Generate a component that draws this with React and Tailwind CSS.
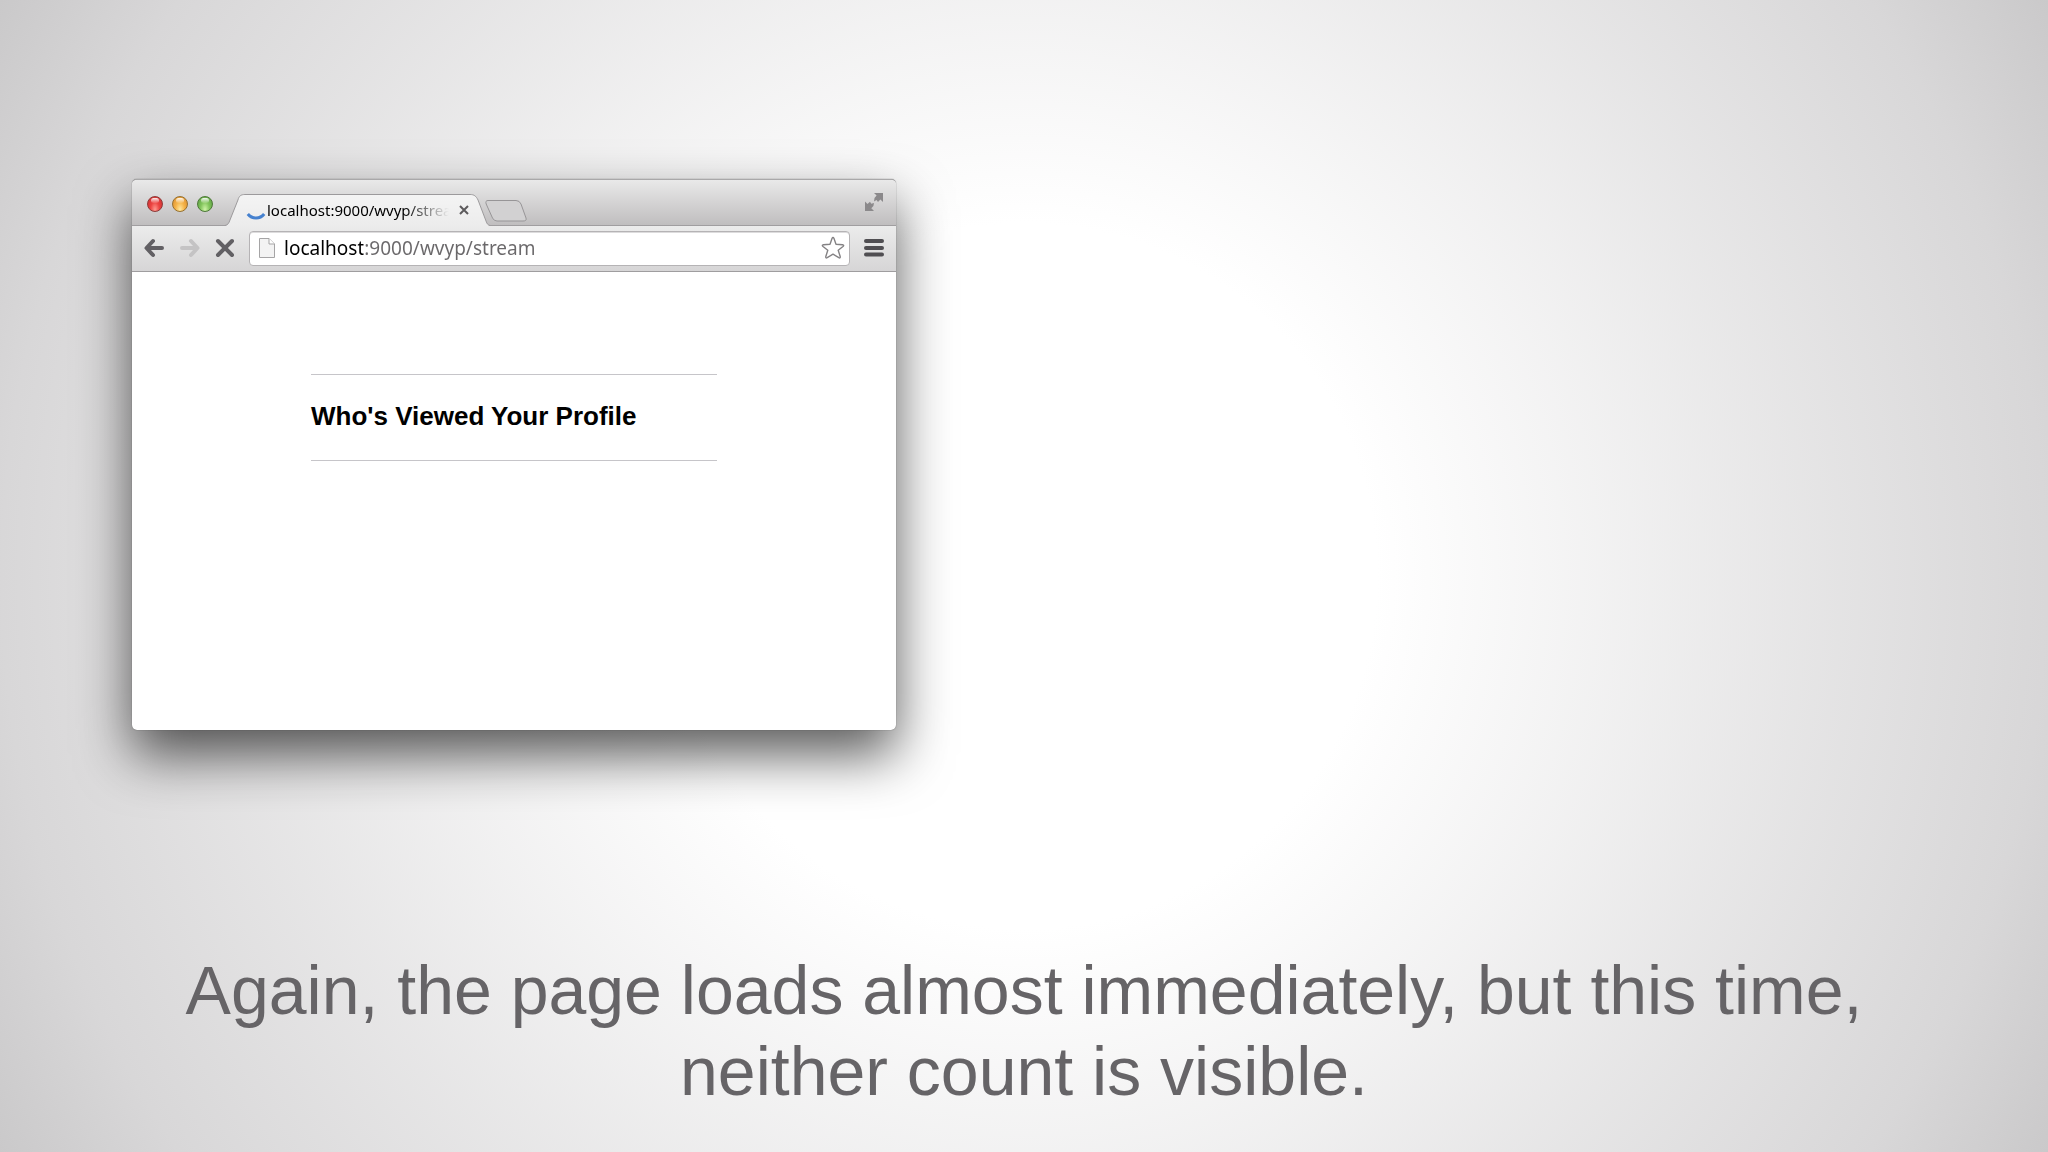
const lights = [
  { name: "Close window", style: "border-[#8d3a38] bg-[radial-gradient(ellipse_at_50%_90%,#ff9a90_0%,#ec4340_45%,#c92d30_100%)]" },
  { name: "Minimize window", style: "border-[#96702f] bg-[radial-gradient(ellipse_at_50%_90%,#ffe9a0_0%,#f5b44a_45%,#d98a2b_100%)]" },
  { name: "Zoom window", style: "border-[#4d7838] bg-[radial-gradient(ellipse_at_50%_90%,#d0f5a8_0%,#83c55c_45%,#569a3e_100%)]" },
];

function TitleBar() {
  return (
    <div className="flex h-[46px] items-end bg-linear-to-b from-[#e9e9e9] to-[#bfbdbe] pr-3 pl-[15px] shadow-[inset_0_-1px_0_#a09ea0]">
      <div className="flex gap-[9px] self-center pt-[2px]">
        {lights.map((l) => (
          <button
            key={l.name}
            aria-label={l.name}
            className={`flex size-4 justify-center rounded-full border pt-px ${l.style}`}
          >
            <span className="h-[5px] w-2 rounded-full bg-linear-to-b from-white/90 to-white/10" />
          </button>
        ))}
      </div>
      <div className="relative ml-3 flex h-8 w-[265px] items-center pr-[21px] pl-[21px]">
        <svg viewBox="0 0 266 32" preserveAspectRatio="none" className="absolute inset-0 size-full" aria-hidden="true">
          <defs>
            <linearGradient id="tab-fill" x1="0" y1="0" x2="0" y2="1">
              <stop offset="0" stopColor="#f4f4f4" />
              <stop offset="1" stopColor="#ececec" />
            </linearGradient>
          </defs>
          <path
            d="M0 32 C3 31 4 29 5 26 L13 6 C14 2 16 .5 20 .5 L246 .5 C250 .5 252 2 254 6 L262 27 C263 30 264 31 266 32 Z"
            fill="url(#tab-fill)"
          />
          <path
            d="M0 31.5 C3 31 4 29 5 26 L13 6 C14 2 16 .5 20 .5 L246 .5 C250 .5 252 2 254 6 L262 27 C263 30 264 31 266 31.5"
            fill="none"
            stroke="#9c9a9c"
          />
        </svg>
        <svg viewBox="0 0 20 20" className="relative size-5 shrink-0" aria-hidden="true">
          <path d="M1.800 14 A10.500 10.500 0 0 0 18.200 14" fill="none" stroke="#4681cf" strokeWidth="3" />
        </svg>
        <span className="relative ml-px flex-1 overflow-hidden bg-linear-to-r from-black from-75% to-transparent bg-clip-text text-[15px] leading-5 whitespace-nowrap text-transparent">
          localhost:9000/wvyp/stream
        </span>
        <button aria-label="Close tab" className="relative ml-[10px] shrink-0">
          <svg viewBox="0 0 10 10" className="size-[10px]">
            <path d="M1 1 L9 9 M9 1 L1 9" stroke="#5c5a5c" strokeWidth="2" />
          </svg>
        </button>
      </div>
      <button aria-label="New tab" className="mb-[4px] -ml-[5px]">
        <svg viewBox="0 0 42 22" className="h-[22px] w-[42px]">
          <path
            d="M3 .5 L31 .5 Q34.500 .5 36 4 L41 18 Q42 21 38 21 L12 21 Q9 21 7.500 18 L1.200 4 Q0 .5 3 .5 Z"
            fill="#d2d1d2"
            stroke="#979597"
          />
        </svg>
      </button>
      <button aria-label="Enter full screen" className="mb-[14px] ml-auto">
        <svg viewBox="0 0 20 20" className="size-5" fill="#8b898b">
          <path d="M10 1 H19 V10 L16.400 7.400 L14 10 L12.500 8 L10 9.500 L10.500 6 L12.600 3.600 Z" />
          <path d="M10 19 H1 V9.500 L3.500 12 L6 9.800 L7.200 11.800 L10 11 L9.400 14 L7.300 16.300 Z" />
        </svg>
      </button>
    </div>
  );
}

function ToolBar() {
  return (
    <div className="flex h-[46px] items-center border-b border-[#9f9d9f] bg-linear-to-b from-[#ececec] to-[#d6d5d6] pr-3 pb-px pl-[11px]">
      <button aria-label="Back">
        <svg viewBox="0 0 22 20" className="h-5 w-[22px]" fill="none" stroke="#626064" strokeWidth="4" strokeLinecap="round" strokeLinejoin="round">
          <path d="M10 3 L3.500 10 L10 17 M4 10 H19" />
        </svg>
      </button>
      <button aria-label="Forward" className="ml-[14px]">
        <svg viewBox="0 0 22 20" className="h-5 w-[22px]" fill="none" stroke="#c4c3c4" strokeWidth="4" strokeLinecap="round" strokeLinejoin="round">
          <path d="M12 3 L18.500 10 L12 17 M18 10 H3" />
        </svg>
      </button>
      <button aria-label="Stop loading" className="ml-[14px]">
        <svg viewBox="0 0 20 20" className="size-5" fill="none" stroke="#626064" strokeWidth="4" strokeLinecap="round">
          <path d="M3 3 L17 17 M17 3 L3 17" />
        </svg>
      </button>
      <div className="ml-[14px] flex h-[35px] flex-1 items-center rounded-[4px] border border-[#b5b3b5] bg-white pr-1 pl-[9px] shadow-[inset_0_1px_0_#dddcdd]">
        <svg viewBox="0 0 16 20" className="h-5 w-4 shrink-0" fill="#f3f3f3" stroke="#a5a4a5" aria-hidden="true">
          <path d="M.5 .5 H10 L15.500 6 V19.500 H.5 Z" />
          <path d="M10 .5 V6 H15.500" fill="#fff" />
        </svg>
        <input
          aria-label="Address"
          defaultValue="localhost:9000/wvyp/stream"
          className="ml-[9px] min-w-0 flex-1 bg-[linear-gradient(to_right,#000_79px,#6a686a_79px)] bg-clip-text text-[19px] leading-7 text-transparent outline-none"
        />
        <button aria-label="Bookmark this page" className="shrink-0">
          <svg viewBox="0 0 24 24" className="size-6" fill="#fff" stroke="#848284" strokeWidth="1.400" strokeLinejoin="round">
            <path d="M12 1.500 Q12.600 1.500 13 2.500 L15 8.300 L21.500 8.700 Q23.500 9 22 10.500 L17.200 14.300 L19.200 20.500 Q19.500 22.500 17.800 21.700 L12 18.200 L6.200 21.700 Q4.500 22.500 4.800 20.500 L6.800 14.300 L2 10.500 Q.5 9 2.500 8.700 L9 8.300 L11 2.500 Q11.400 1.500 12 1.500 Z" />
          </svg>
        </button>
      </div>
      <button aria-label="Menu" className="ml-[14px]">
        <svg viewBox="0 0 20 18" className="h-[18px] w-5" fill="#504e52">
          <rect width="20" height="4" y="0" rx="2" />
          <rect width="20" height="4" y="7" rx="2" />
          <rect width="20" height="4" y="13.500" rx="2" />
        </svg>
      </button>
    </div>
  );
}

export default function App() {
  return (
    <main className="flex min-h-screen flex-col bg-[radial-gradient(circle_farthest-corner_at_center,#ffffff_0%,#ffffff_30%,#d8d7d8_87%,#cac9ca_100%)] pt-[179px] pb-10 font-['Liberation_Sans',Arial,sans-serif]">
      <div className="grid grid-cols-[132fr_764fr_1152fr]">
        <section className="col-start-2 overflow-hidden rounded-[5px] border-t border-[#a9a8a9] bg-white font-['Noto_Sans','Open_Sans',sans-serif] shadow-[0_0_1px_#444,0_25px_54px_rgba(0,0,0,0.65)]">
          <TitleBar />
          <ToolBar />
          <div className="grid min-h-[458px] grid-cols-[179fr_406fr_179fr] items-start pt-[102px]">
            <h1 className="col-start-2 border-y border-[#c6c5c9] pt-[26px] pb-[29px] font-['Liberation_Sans',Arial,sans-serif] text-[26px] leading-[30px] font-bold whitespace-nowrap text-black">
              Who's Viewed Your Profile
            </h1>
          </div>
        </section>
      </div>
      <p className="mx-auto mt-auto w-[84%] text-center text-[68px] leading-[81px] text-[#666467]">
        Again, the page loads almost immediately, but this time, neither count is visible.
      </p>
    </main>
  );
}
